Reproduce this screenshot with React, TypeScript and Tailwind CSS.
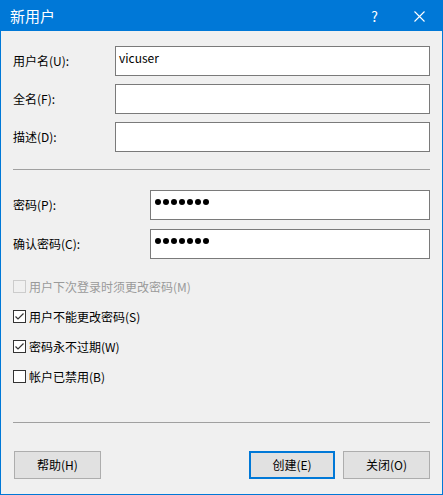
import React from "react";

const font = { fontFamily: '"Noto Sans CJK SC", "Noto Sans", sans-serif' };

function Field({ label, value, labelW, password }: { label: string; value?: string; labelW: string; password?: boolean }) {
  return (
    <div className="flex items-center h-[30px]">
      <div className={`${labelW} shrink-0 text-[12px] text-black`}>{label}</div>
      <div className="flex-1 h-[30px] bg-white border border-[#7a7a7a]">
        {password ? (
          <div className="flex gap-[2px] pl-[4px] pt-[8px]">
            {Array.from({ length: 7 }).map((_, i) => (
              <span key={i} className="w-[6px] h-[6px] rounded-full bg-black" />
            ))}
          </div>
        ) : (
          <div className="pl-[3px] pt-[2px] text-[12px] leading-[18px] text-black">{value}</div>
        )}
      </div>
    </div>
  );
}

function Check({ label, checked, disabled }: { label: string; checked?: boolean; disabled?: boolean }) {
  return (
    <div className="flex items-center h-[13px]">
      <div
        className={
          disabled
            ? "w-[13px] h-[13px] shrink-0 border border-[#cccccc] bg-[#f0f0f0]"
            : "w-[13px] h-[13px] shrink-0 border border-[#333333] bg-white flex items-center justify-center"
        }
      >
        {checked && (
          <svg width="11" height="11" viewBox="0 0 11 11">
            <path d="M1.5 5.5 L4 8 L9.5 2.5" fill="none" stroke="#333333" strokeWidth="1.2" />
          </svg>
        )}
      </div>
      <span className={`ml-[3px] text-[12px] ${disabled ? "text-[#9a9a9a]" : "text-black"}`}>{label}</span>
    </div>
  );
}

function Btn({ label, primary }: { label: string; primary?: boolean }) {
  return (
    <div
      className={
        primary
          ? "w-[86px] h-[28px] bg-[#e1e1e1] border-2 border-[#0078d7] flex items-center justify-center text-[12px] text-black"
          : "w-[87px] h-[28px] bg-[#e1e1e1] border border-[#adadad] flex items-center justify-center text-[12px] text-black"
      }
    >
      {label}
    </div>
  );
}

export default function App() {
  return (
    <div className="w-[443px] h-[495px] bg-[#0078d7] p-px flex flex-col" style={font}>
      <div className="h-[30px] flex items-center text-white">
        <span className="ml-[9px] text-[15px]">新用户</span>
        <span className="ml-auto text-[14px] mr-[36px]">?</span>
        <svg className="mr-[17px]" width="11" height="11" viewBox="0 0 11 11">
          <path d="M0.5 0.5 L10.5 10.5 M10.5 0.5 L0.5 10.5" stroke="white" strokeWidth="1.1" />
        </svg>
      </div>
      <div className="flex-1 bg-[#f0f0f0] pt-[15px] pl-[12px] pr-[12px] flex flex-col">
        <div className="flex flex-col gap-[8px]">
          <Field label="用户名(U):" value="vicuser" labelW="w-[102px]" />
          <Field label="全名(F):" labelW="w-[102px]" />
          <Field label="描述(D):" labelW="w-[102px]" />
        </div>
        <div className="mt-[17px] h-px bg-[#a0a0a0]" />
        <div className="mt-[20px] flex flex-col gap-[9px]">
          <Field label="密码(P):" labelW="w-[137px]" password />
          <Field label="确认密码(C):" labelW="w-[137px]" password />
        </div>
        <div className="mt-[21px] flex flex-col gap-[17px]">
          <Check label="用户下次登录时须更改密码(M)" disabled />
          <Check label="用户不能更改密码(S)" checked />
          <Check label="密码永不过期(W)" checked />
          <Check label="帐户已禁用(B)" />
        </div>
        <div className="mt-[39px] h-px bg-[#a0a0a0]" />
        <div className="mt-[28px] flex items-center">
          <div className="ml-px">
            <Btn label="帮助(H)" />
          </div>
          <div className="ml-auto flex gap-[8px]">
            <Btn label="创建(E)" primary />
            <Btn label="关闭(O)" />
          </div>
        </div>
      </div>
    </div>
  );
}
